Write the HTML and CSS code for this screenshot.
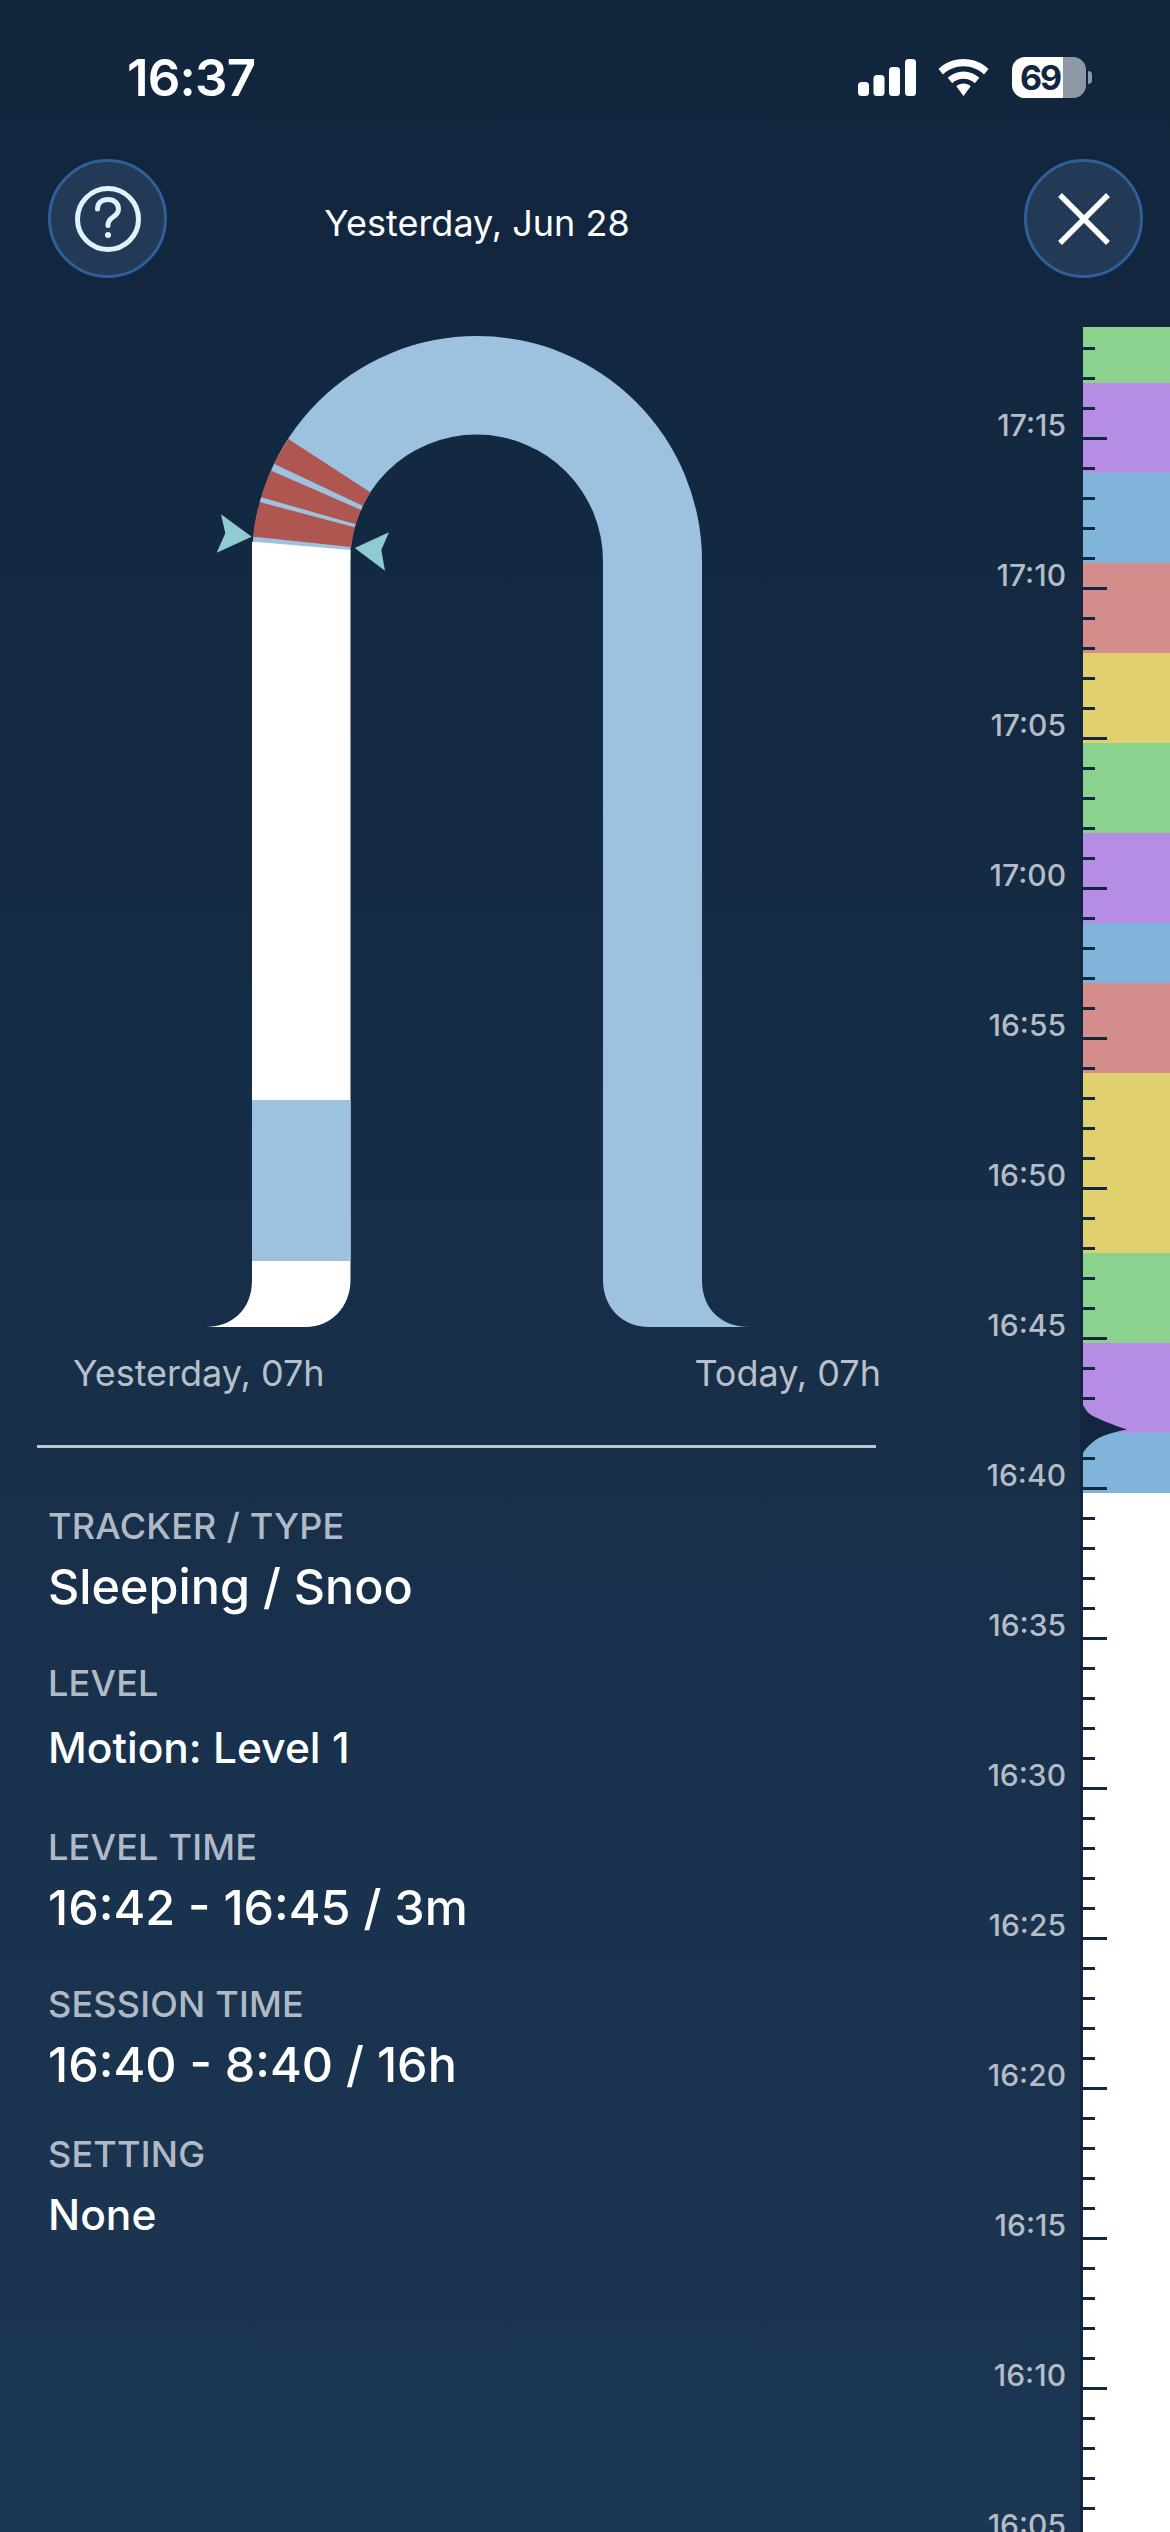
FILE: index.html
```html
<!DOCTYPE html>
<html lang="en">
<head>
    <meta charset="UTF-8">
    <meta name="viewport" content="width=device-width, initial-scale=1.0">
    <title>Session detail</title>
    <link rel="stylesheet" href="styles.css">
</head>
<body>

    <div class="page">
        <!-- Status bar -->
        <div class="status">
            <div class="clock">16:37</div>
            <div class="status-icons">
                <svg class="signal" width="58" height="37" viewBox="0 0 58 37">
                    <rect x="0" y="23" width="11" height="14" rx="3.5"/>
                    <rect x="15.5" y="16" width="11" height="21" rx="3.5"/>
                    <rect x="31" y="8" width="11" height="29" rx="3.5"/>
                    <rect x="47" y="0" width="11" height="37" rx="3.5"/>
                </svg>
                <svg class="wifi" width="51" height="37" viewBox="0 0 51 37">
                    <path d="M25.5 0C15.5 0 7 3.800 0.500 10L5 15.500C10.500 10.300 17.500 7.300 25.500 7.300C33.500 7.300 40.500 10.300 46 15.500L50.500 10C44 3.800 35.500 0 25.500 0Z"/>
                    <path d="M25.500 12.500C19.500 12.500 14 14.800 9.700 18.800L14.200 24.200C17.200 21.500 21 19.800 25.500 19.800C30 19.800 33.800 21.500 36.800 24.200L41.300 18.800C37 14.800 31.500 12.500 25.500 12.500Z"/>
                    <path d="M25.500 24.500C22.800 24.500 20.300 25.500 18.300 27.300L25.500 37L32.700 27.300C30.700 25.500 28.200 24.500 25.500 24.500Z"/>
                </svg>
                <div class="battery">
                    <span class="battery-level">69</span>
                </div>
                <div class="battery-nub"></div>
            </div>
        </div>

        <!-- Header -->
        <div class="header">
            <button class="round-btn">
                <svg width="72" height="72" viewBox="0 0 72 72" fill="none" stroke="#dff3ff" stroke-width="5">
                    <circle cx="36" cy="36" r="30.500"/>
                    <path d="M25.500 26C25.500 20 30 16.500 36 16.500C42 16.500 46.500 20.500 46.500 26C46.500 30.500 43.500 32.500 40.500 34.500C37.500 36.500 36 38.500 36 42.500" stroke-linecap="round"/>
                    <circle cx="36" cy="52" r="3" fill="#dff3ff" stroke="none"/>
                </svg>
            </button>
            <div class="date">Yesterday, Jun 28</div>
            <button class="round-btn">
                <svg width="56" height="56" viewBox="0 0 56 56" fill="none" stroke="#ffffff" stroke-width="5.500">
                    <path d="M4 4L52 52M52 4L4 52"/>
                </svg>
            </button>
        </div>

        <div class="main">
            <div class="left">
                <svg class="chart" width="800" height="1010" viewBox="0 327 800 1010">
                    <!-- arch and right leg -->
                    <path fill="#9cc2e0" d="M252 1280V561A225 225 0 0 1 702 561V1280C702 1310 722 1327 750 1327H649C622 1327 603 1307 603 1280V561A126.500 126.500 0 0 0 350 561V1280H252Z"/>
                    <!-- left leg -->
                    <path fill="#ffffff" d="M252 541.700L350.500 550V1280C350.500 1307 331 1327 306 1327H205C232 1327 252 1310 252 1280Z"/>
                    <rect x="252" y="1100" width="98.500" height="161" fill="#9cc2e0"/>
                    <!-- red segment -->
                    <path fill="#b05650" d="M288.300 439A225 225 0 0 0 253 536.700L351.300 547A126.500 126.500 0 0 1 370.300 492.300Z"/>
                    <path fill="#9cc2e0" d="M274.300 464L271.300 470.700L361.300 510L362.700 505.700Z"/>
                    <path fill="#9cc2e0" d="M261.300 497.300L259.700 502L354.700 527.300L355.700 524.300Z"/>
                    <!-- markers -->
                    <path fill="#8ecbd2" d="M221 514.300L251.700 536.700L216.700 552.700L225.300 533.300Z"/>
                    <path fill="#8ecbd2" d="M354.700 548L389 532.300L381.300 550L385 570.700Z"/>
                </svg>

                <div class="axis">
                    <span>Yesterday, 07h</span>
                    <span>Today, 07h</span>
                </div>
                <div class="divider"></div>

                <div class="field">
                    <div class="label">TRACKER / TYPE</div>
                    <div class="value">Sleeping / Snoo</div>
                </div>
                <div class="field">
                    <div class="label">LEVEL</div>
                    <div class="value small">Motion: Level 1</div>
                </div>
                <div class="field">
                    <div class="label">LEVEL TIME</div>
                    <div class="value">16:42 - 16:45 / 3m</div>
                </div>
                <div class="field">
                    <div class="label">SESSION TIME</div>
                    <div class="value">16:40 - 8:40 / 16h</div>
                </div>
                <div class="field last">
                    <div class="label">SETTING</div>
                    <div class="value small">None</div>
                </div>
            </div>

            <div class="times">
                <div>17:15</div>
                <div>17:10</div>
                <div>17:05</div>
                <div>17:00</div>
                <div>16:55</div>
                <div>16:50</div>
                <div>16:45</div>
                <div>16:40</div>
                <div>16:35</div>
                <div>16:30</div>
                <div>16:25</div>
                <div>16:20</div>
                <div>16:15</div>
                <div>16:10</div>
                <div>16:05</div>
            </div>

            <div class="strip">
                <div class="band green h56"></div>
                <div class="band purple"></div>
                <div class="band blue"></div>
                <div class="band red"></div>
                <div class="band yellow"></div>
                <div class="band green"></div>
                <div class="band purple"></div>
                <div class="band blue h60"></div>
                <div class="band red"></div>
                <div class="band yellow h180"></div>
                <div class="band green"></div>
                <div class="band purple"></div>
                <div class="band blue h60"></div>
                <div class="band rest"></div>
                <svg class="notch" width="44" height="48" viewBox="0 0 44 48">
                    <path d="M0 0C3 6 6 9 10 11C16 14 30 20 44 24.500C30 27 17 31 10 37C6 40 2 44 0 48Z"/>
                </svg>
            </div>
        </div>
    </div>

</body>
</html>
```

FILE: styles.css
```css
body {
    margin: 0;
    font-family: Inter, "Liberation Sans", sans-serif;
    color: #ffffff;
}

.page {
    width: 1170px;
    height: 2532px;
    overflow: hidden;
    display: flex;
    flex-direction: column;
    background: linear-gradient(#11253d, #1c3753);
}

/* Status bar */
.status {
    height: 159px;
    box-sizing: border-box;
    padding: 54px 0 0 127px;
    display: flex;
    justify-content: space-between;
}

.clock {
    font-size: 51px;
    line-height: 48px;
    font-weight: 600;
    letter-spacing: -0.8px;
}

.status-icons {
    display: flex;
    align-items: center;
    height: 41px;
    padding-top: 3px;
    padding-right: 78px;
}

.status-icons svg {
    fill: #ffffff;
}

.wifi {
    margin-left: 22px;
}

.battery {
    width: 74px;
    height: 41px;
    margin-left: 23px;
    border-radius: 13px;
    background: linear-gradient(90deg, #ffffff 51px, #8d98a5 51px);
    color: #12263f;
    text-align: center;
}

.battery-level {
    display: block;
    padding-right: 18px;
    font-size: 34px;
    line-height: 41px;
    font-weight: 700;
    letter-spacing: -2px;
}

.battery-nub {
    width: 4px;
    height: 13px;
    margin-left: 2px;
    border-radius: 0 4px 4px 0;
    background-color: #8d98a5;
}

/* Header */
.header {
    height: 168px;
    padding: 0 27px 0 48px;
    display: flex;
    align-items: flex-start;
}

.round-btn {
    width: 119px;
    height: 119px;
    padding: 0;
    display: flex;
    align-items: center;
    justify-content: center;
    background-color: #233a56;
    border: 3px solid #2f5f96;
    border-radius: 50%;
}

.date {
    width: 620px;
    margin-right: auto;
    padding-top: 43px;
    text-align: center;
    font-size: 36px;
    line-height: 42px;
}

/* Main area */
.main {
    flex: 1;
    display: flex;
    min-height: 0;
}

.left {
    width: 960px;
    flex: none;
}

.chart {
    display: block;
}

.axis {
    width: 808px;
    margin: 15px 0 0 73px;
    display: flex;
    justify-content: space-between;
    font-size: 36px;
    line-height: 42px;
    color: #b8c0ca;
}

.divider {
    width: 839px;
    height: 3px;
    margin: 51px 0 0 37px;
    background-color: #bac7d3;
}

.field {
    margin: 36px 0 0 48px;
}

.divider + .field {
    margin-top: 53px;
}

.field.last {
    margin-top: 29px;
}

.label {
    font-size: 36px;
    line-height: 50px;
    font-weight: 500;
    letter-spacing: 0.2px;
    color: #b0bac6;
}

.value {
    font-size: 48.500px;
    line-height: 71px;
    font-weight: 500;
}

.value.small {
    padding: 4px 0 3px;
    font-size: 42.500px;
}

.field.last .value.small {
    padding-top: 0;
}

/* Timeline */
.times {
    width: 120px;
    flex: none;
    padding: 23px 14px 0 0;
    box-sizing: border-box;
    font-size: 30px;
    font-weight: 500;
    color: #b5bcc5;
    text-align: right;
}

.times div {
    height: 150px;
    display: flex;
    align-items: center;
    justify-content: flex-end;
}

.strip {
    position: relative;
    flex: 1;
    display: flex;
    flex-direction: column;
    border-left: 3px solid #12263f;
}

/* minute ticks over the bands */
.strip::after {
    content: "";
    position: absolute;
    top: 0;
    bottom: 0;
    left: 0;
    width: 24px;
    background-image:
        linear-gradient(#12263f 3px, transparent 3px),
        linear-gradient(#12263f 3px, transparent 3px);
    background-repeat: repeat-y;
    background-size: 12px 30px, 24px 150px;
    background-position: 0 20px, 0 110px;
}

.band {
    height: 90px;
    flex: none;
}

.band.h56 {
    height: 56px;
}

.band.h60 {
    height: 60px;
}

.band.h180 {
    height: 180px;
}

.band.rest {
    flex: 1;
    background-color: #ffffff;
}

.green {
    background-color: #8cd28f;
}

.purple {
    background-color: #b58de4;
}

.blue {
    background-color: #80b4da;
}

.red {
    background-color: #d58d8b;
}

.yellow {
    background-color: #e0d06e;
}

.notch {
    position: absolute;
    top: 1078px;
    left: 0;
    fill: #12263f;
}
```
